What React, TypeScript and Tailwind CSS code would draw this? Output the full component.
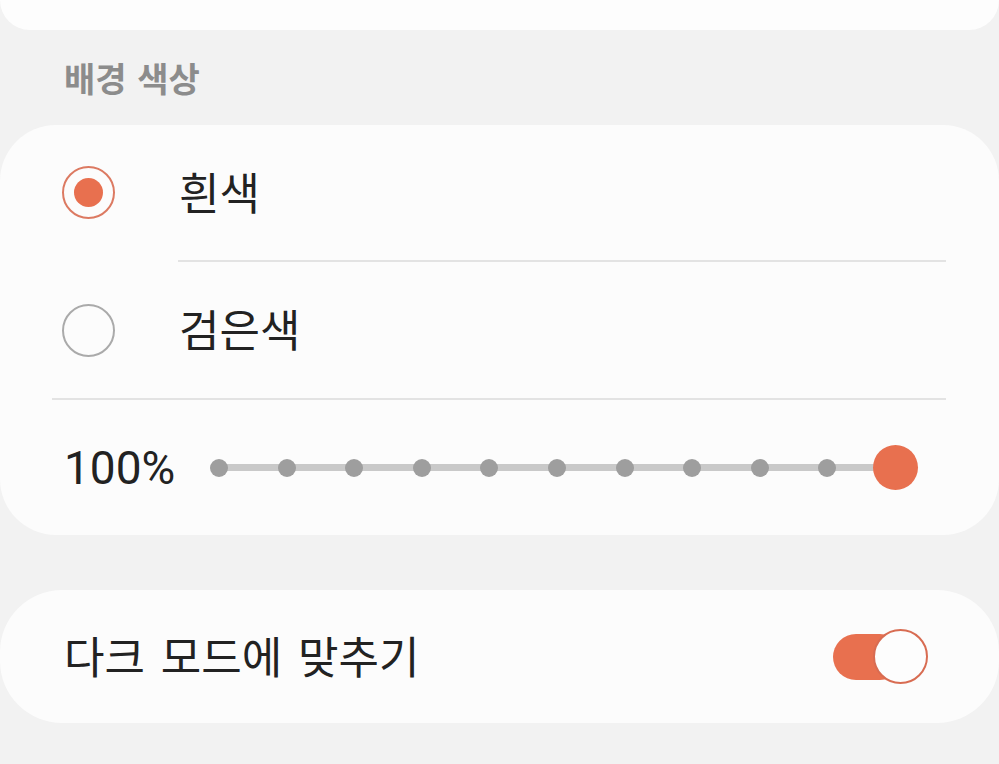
import React from "react";

const KR = { fontFamily: '"Noto Sans CJK KR", "Noto Sans", sans-serif' };

function Radio({ checked }: { checked: boolean }) {
  return checked ? (
    <div className="w-[53px] h-[53px] rounded-full border-[2.5px] border-[#dc7a62] flex items-center justify-center shrink-0">
      <div className="w-[29px] h-[29px] rounded-full bg-[#e8704f]" />
    </div>
  ) : (
    <div className="w-[53px] h-[53px] rounded-full border-[2.5px] border-[#aaaaaa] shrink-0" />
  );
}

export default function App() {
  const dots = Array.from({ length: 10 });
  return (
    <div className="w-[999px] h-[764px] bg-[#f2f2f2] overflow-hidden flex flex-col" style={KR}>
      <div className="h-[30px] bg-[#fdfdfd] rounded-b-[55px] shrink-0" />
      <div className="h-[95px] shrink-0 pl-[64px] pt-[28px]">
        <div className="text-[34px] leading-[40px] font-bold text-[#8c8c8c] [word-spacing:3px]">배경 색상</div>
      </div>
      <div className="bg-[#fcfcfc] rounded-[56px] h-[410px] shrink-0 flex flex-col">
        <div className="h-[135px] flex items-center pl-[62px]">
          <Radio checked />
          <div className="ml-[64px] text-[44px] text-[#222222] leading-none pb-[4px]">흰색</div>
        </div>
        <div className="h-[2px] bg-[#e3e3e3] ml-[178px] mr-[53px]" />
        <div className="h-[136px] flex items-center pl-[62px]">
          <Radio checked={false} />
          <div className="ml-[64px] text-[44px] text-[#222222] leading-none pb-[4px]">검은색</div>
        </div>
        <div className="h-[2px] bg-[#e3e3e3] ml-[52px] mr-[53px]" />
        <div className="flex-1 flex items-center pl-[64px]">
          <div className="text-[46px] leading-none text-[#222222] w-[155px]" style={{ fontFamily: "Roboto, sans-serif" }}>
            100%
          </div>
          <div className="relative w-[698px] h-[46px] flex items-center">
            <div className="absolute left-[1px] right-[30px] h-[7px] bg-[#c9c9c9] rounded-full" />
            {dots.map((_, i) => (
              <div
                key={i}
                className="absolute w-[18px] h-[18px] rounded-full bg-[#9e9e9e]"
                style={{ left: i * 67.6 - 9 }}
              />
            ))}
            <div className="absolute left-[654px] w-[45px] h-[45px] rounded-full bg-[#e8704f]" />
          </div>
        </div>
      </div>
      <div className="h-[55px] shrink-0" />
      <div className="bg-[#fcfcfc] rounded-[62px] h-[133px] shrink-0 flex items-center pl-[64px] pr-[70px]">
        <div className="text-[44px] text-[#222222] leading-none flex-1 pb-[4px] [word-spacing:6px]">다크 모드에 맞추기</div>
        <div className="relative w-[96px] h-[56px] flex items-center">
          <div className="absolute left-0 w-[70px] h-[46px] rounded-full bg-[#e8704f]" />
          <div className="absolute left-[40px] w-[55px] h-[55px] rounded-full bg-[#fdfdfd] border-[2.5px] border-[#d86c52]" />
        </div>
      </div>
    </div>
  );
}
